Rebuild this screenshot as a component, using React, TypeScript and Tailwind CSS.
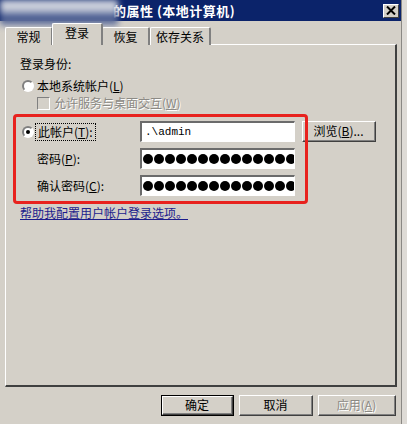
import React from 'react';

const FONT = { fontFamily: '"Noto Sans CJK SC", "Liberation Sans", sans-serif' };

function Radio({ checked }: { checked?: boolean }) {
  return (
    <div className="w-[12px] h-[12px] rounded-full border-2 border-t-[#808080] border-l-[#808080] border-b-white border-r-white bg-white flex items-center justify-center shrink-0">
      {checked && <div className="w-[4px] h-[4px] rounded-full bg-black" />}
    </div>
  );
}

function Field({ children }: { children: React.ReactNode }) {
  return (
    <div className="w-[155px] h-[21px] bg-white border-t-2 border-l-2 border-t-[#6b6b6b] border-l-[#6b6b6b] border-b border-r border-b-white border-r-white flex items-center overflow-hidden">
      {children}
    </div>
  );
}

function Dots() {
  return (
    <div className="flex gap-[1px] pl-[1px] shrink-0">
      {Array.from({ length: 15 }).map((_, i) => (
        <div key={i} className="w-[10px] h-[10px] rounded-full bg-black shrink-0" />
      ))}
    </div>
  );
}

function Btn({ children, w, def, disabled }: { children: React.ReactNode; w: string; def?: boolean; disabled?: boolean }) {
  return (
    <div className={`${w} h-[21px] ${def ? 'border border-black' : ''}`}>
      <div className="w-full h-full border-t border-l border-t-white border-l-white border-b border-r border-b-[#404040] border-r-[#404040] bg-[#d4d0c8]">
        <div className={`w-full h-full border-b border-r border-b-[#808080] border-r-[#808080] flex items-center justify-center text-[12px] leading-none ${disabled ? 'text-[#8c8a85] [text-shadow:1px_1px_0_#fff]' : 'text-black'}`}>
          {children}
        </div>
      </div>
    </div>
  );
}

function Tab({ label, w, active }: { label: string; w: string; active?: boolean }) {
  return (
    <div
      className={`${w} ${active ? 'h-[22px] -mx-[1px] z-10 pt-[2px]' : 'h-[18px] pt-[2px]'} bg-[#d4d0c8] border-t border-l border-t-white border-l-white border-r-2 border-r-[#808080] rounded-t-[2px] text-[12px] leading-[14px] flex justify-center`}
    >
      {label}
    </div>
  );
}

export default function App() {
  return (
    <div className="w-[407px] h-[424px] bg-[#d4d0c8] flex overflow-hidden text-black" style={FONT}>
      <div className="w-[402px] h-full relative flex flex-col border-r border-[#8a8884]">
        {/* title bar */}
        <div className="h-[21px] bg-[#0b236a] flex items-center relative shrink-0">
          <div className="pl-[113px] text-white font-bold text-[13px] leading-none tracking-[0.5px]">的属性 (本地计算机)</div>
          <div className="ml-auto mr-[2px] w-[16px] h-[14px] bg-[#d4d0c8] border-t border-l border-white border-b border-r border-b-[#404040] border-r-[#404040] flex items-center justify-center">
            <svg width="10" height="9" viewBox="0 0 10 9">
              <path d="M1 0.5 L9 8.5 M9 0.5 L1 8.5" stroke="black" strokeWidth="2" />
            </svg>
          </div>
        </div>
        {/* blurred name */}
        <div className="absolute left-0 top-0 w-[118px] h-[27px] blur-[3px] bg-[linear-gradient(180deg,#e4e6ec_0%,#cdd1db_38%,#55679a_58%,#3c4f86_74%,#bcc1cd_100%)] opacity-95" />

        {/* tabs */}
        <div className="h-[24px] flex items-end pl-[5px] shrink-0 relative z-10">
          <Tab label="常规" w="w-[48px]" />
          <Tab label="登录" w="w-[51px]" active />
          <Tab label="恢复" w="w-[48px]" />
          <Tab label="依存关系" w="w-[61px]" />
        </div>

        {/* panel */}
        <div className="mx-[5px] w-[392px] h-[343px] border-t border-l border-white border-b-2 border-r-2 border-b-[#404040] border-r-[#404040] shrink-0 -mt-[1px] pl-[14px] text-[12px] leading-[14px]">
          <div className="mt-[12px] h-[14px]">登录身份:</div>
          <div className="mt-[7px] h-[16px] flex items-center pl-[2px] gap-[3px]">
            <Radio />
            <span>本地系统帐户(<u>L</u>)</span>
          </div>
          <div className="mt-[2px] h-[14px] flex items-center pl-[17px] gap-[4px]">
            <div className="w-[13px] h-[13px] border-t border-l border-t-[#808080] border-l-[#808080] border-b border-r border-b-white border-r-white" />
            <span className="text-[#8c8a85] [text-shadow:1px_1px_0_#fff]">允许服务与桌面交互(<u>W</u>)</span>
          </div>

          <div className="mt-[11px] flex items-center h-[21px]">
            <div className="w-[120px] flex items-center pl-[2px] gap-[1px]">
              <Radio checked />
              <span className="border border-dotted border-black px-[2px] h-[18px] flex items-center">此帐户(<u>T</u>):</span>
            </div>
            <Field>
              <span className="pl-[3px] text-[11px]" style={{ fontFamily: '"Liberation Mono", monospace' }}>.\admin</span>
            </Field>
            <div className="ml-[7px]">
              <Btn w="w-[74px]">浏览(<u>B</u>)...</Btn>
            </div>
          </div>
          <div className="mt-[6px] flex items-center h-[21px]">
            <div className="w-[120px] pl-[17px]">密码(<u>P</u>):</div>
            <Field><Dots /></Field>
          </div>
          <div className="mt-[6px] flex items-center h-[21px]">
            <div className="w-[120px] pl-[17px]">确认密码(<u>C</u>):</div>
            <Field><Dots /></Field>
          </div>
          <div className="mt-[10px] h-[14px]">
            <span className="text-[#1c1c8c] underline">帮助我配置用户帐户登录选项。</span>
          </div>
        </div>

        {/* red highlight */}
        <div className="absolute left-[13px] top-[114px] w-[295px] h-[90px] border-[3px] border-[#e8221e] rounded-[4px]" />

        {/* buttons */}
        <div className="mt-[8px] flex justify-end pr-[5px] gap-[5px]">
          <Btn w="w-[73px]" def>确定</Btn>
          <Btn w="w-[74px]">取消</Btn>
          <Btn w="w-[78px]" disabled>应用(<u>A</u>)</Btn>
        </div>
      </div>
      <div className="flex-1 bg-[#dedbd6]" />
    </div>
  );
}
